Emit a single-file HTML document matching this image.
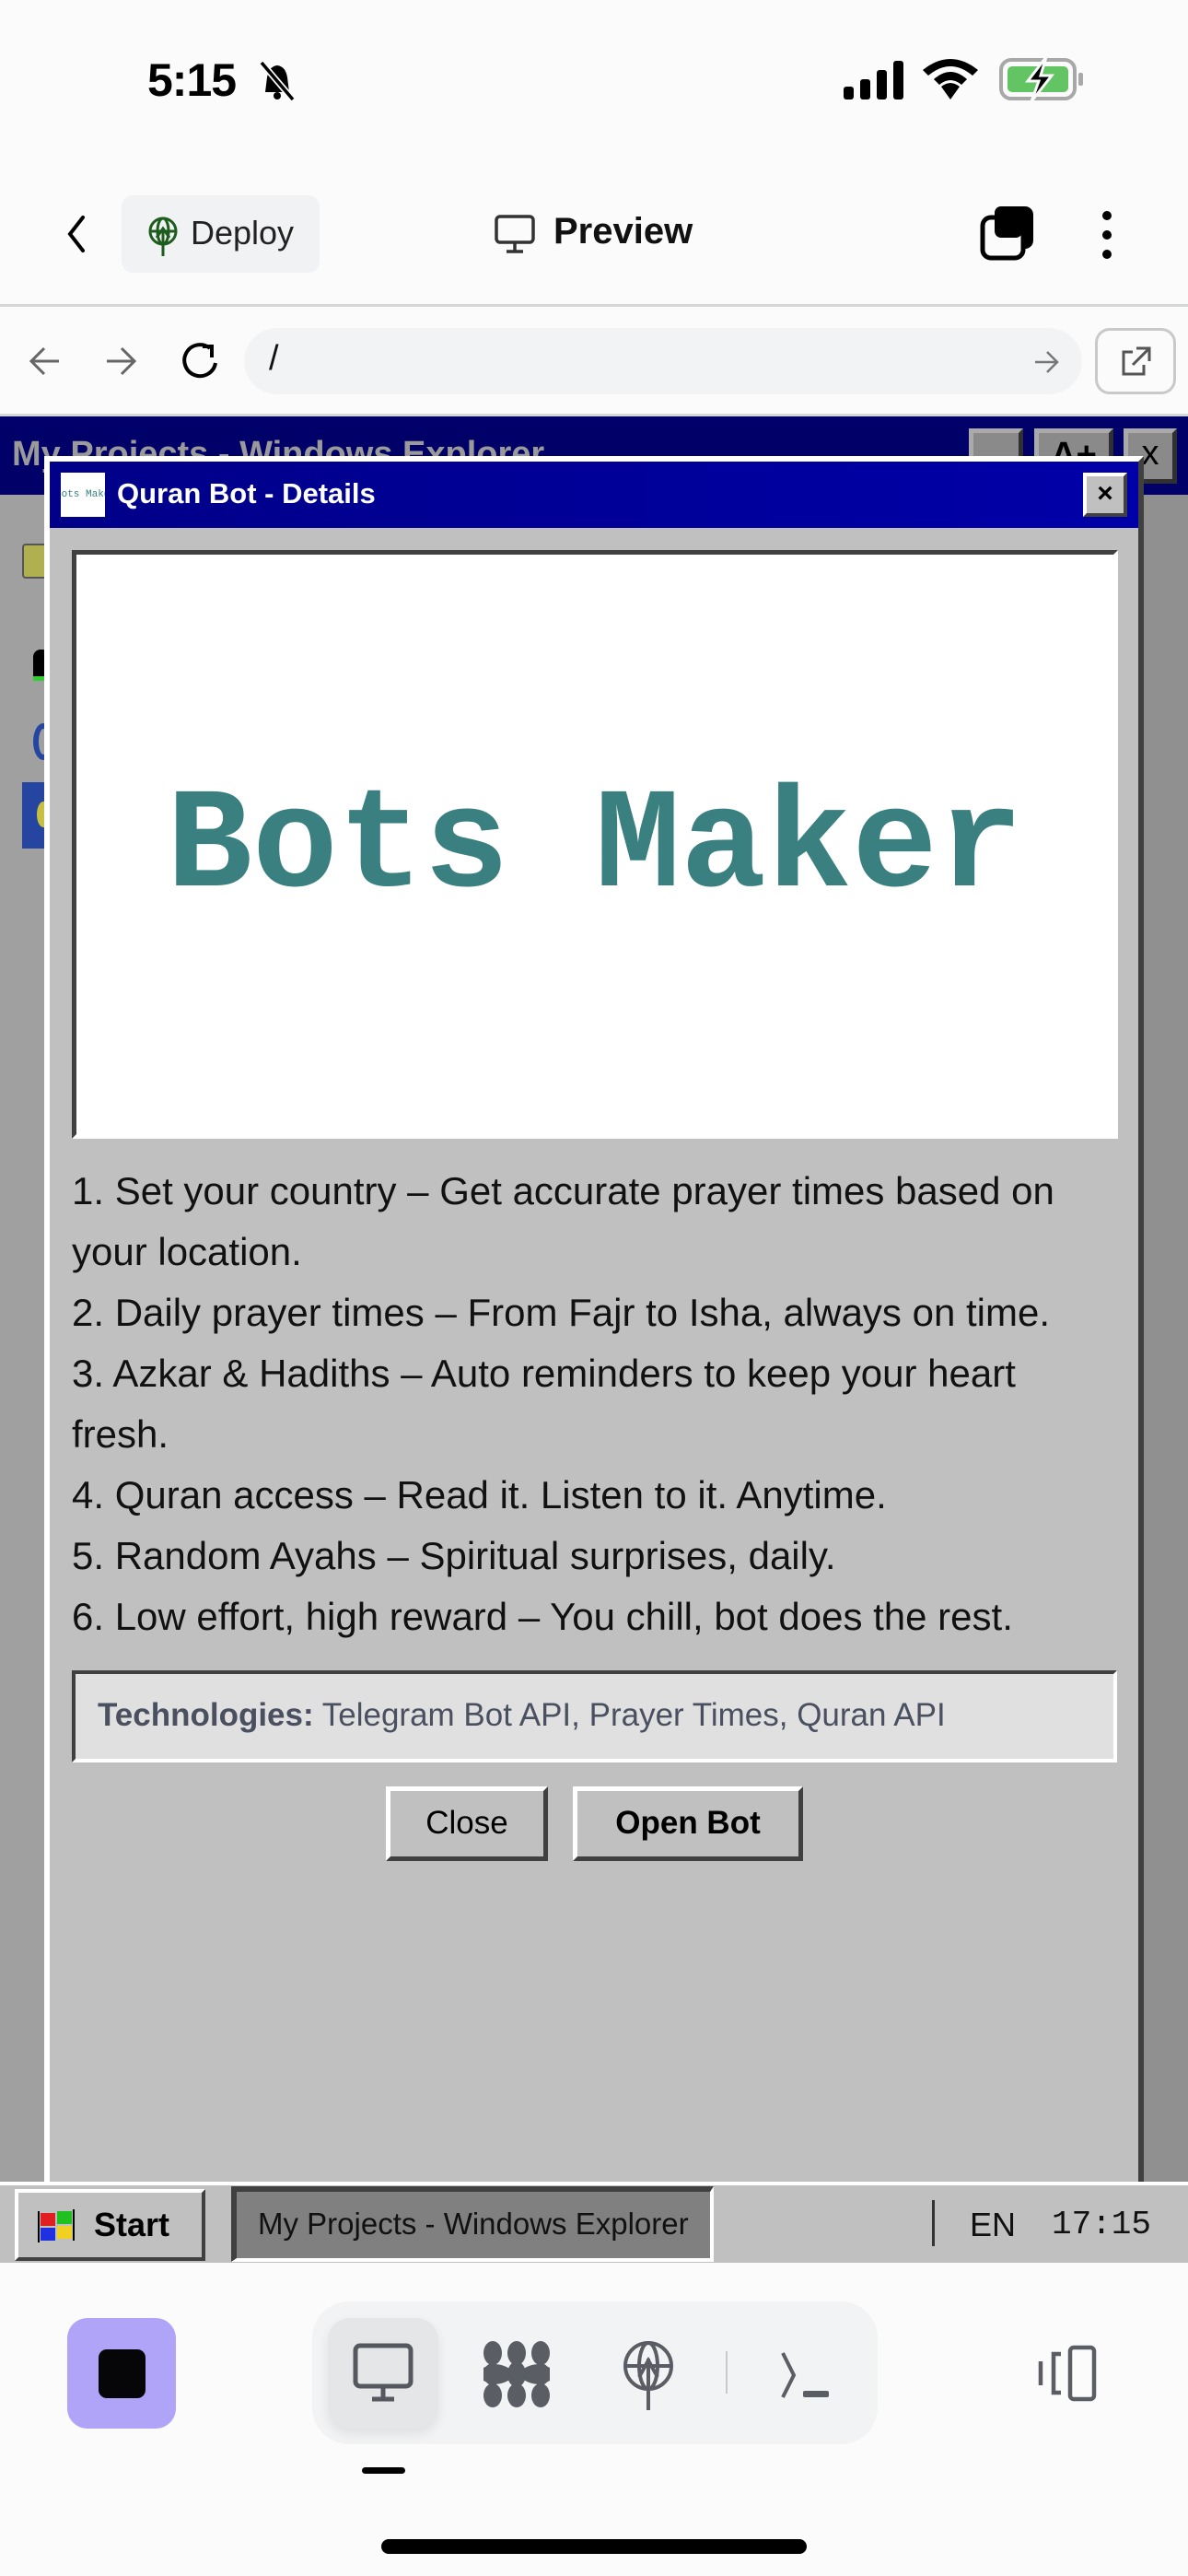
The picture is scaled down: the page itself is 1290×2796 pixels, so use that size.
<!DOCTYPE html>
<html><head><meta charset="utf-8"><style>
*{margin:0;padding:0;box-sizing:border-box}
body{width:1290px;height:2796px;background:#fbfbfb;position:relative;overflow:hidden;font-family:"Liberation Sans",sans-serif}
.a{position:absolute}
.raised{background:#c0c0c0;border-style:solid;border-width:4px;border-color:#fff #404040 #404040 #fff}
.sunk{border-style:solid;border-width:5px;border-color:#404040 #fff #fff #404040}
</style></head><body>

<!-- status bar -->
<div class="a" style="left:160px;top:58px;font-size:50px;font-weight:bold;letter-spacing:-1px">5:15</div>
<svg class="a" style="left:278px;top:66px" width="46" height="44" viewBox="0 0 46 44"><path d="M10 34 L12 18 Q14 6 23 5 Q32 6 34 18 L36 34 Z" fill="#000"/><circle cx="23" cy="38" r="4" fill="#000"/><path d="M6 2 L40 42" stroke="#fbfbfb" stroke-width="7"/><path d="M6 2 L40 42" stroke="#000" stroke-width="3.5"/></svg>
<svg class="a" style="left:914px;top:64px" width="70" height="44"><rect x="2" y="30" width="11" height="14" rx="3"/><rect x="20" y="22" width="11" height="22" rx="3"/><rect x="38" y="12" width="11" height="32" rx="3"/><rect x="56" y="2" width="11" height="42" rx="3"/></svg>
<svg class="a" style="left:1000px;top:64px" width="64" height="46" viewBox="0 0 64 46"><path d="M32 44 L22 30 Q32 22 42 30 Z" /><path d="M16 24 Q32 10 48 24 L42 30 Q32 22 22 30Z" fill="#fbfbfb"/><path d="M14 22 Q32 6 50 22 L44 28 Q32 18 20 28 Z"/><path d="M2 12 Q32 -12 62 12 L56 18 Q32 -2 8 18 Z"/></svg>
<svg class="a" style="left:1084px;top:62px" width="96" height="48"><rect x="3" y="3" width="80" height="42" rx="11" fill="none" stroke="#a8a8a8" stroke-width="4"/><rect x="10" y="10" width="66" height="28" rx="5" fill="#62c462"/><rect x="87" y="17" width="5" height="14" rx="2" fill="#a8a8a8"/><path d="M52 0 L32 26 L44 26 L36 48 L58 20 L46 20 Z" fill="#000" stroke="#fbfbfb" stroke-width="3"/></svg>

<!-- header -->
<svg class="a" style="left:68px;top:232px" width="30" height="44"><path d="M22 4 L8 22 L22 40" fill="none" stroke="#000" stroke-width="4" stroke-linecap="round"/></svg>
<div class="a" style="left:132px;top:212px;width:215px;height:84px;background:#f1f2f4;border-radius:12px"></div>
<svg class="a" style="left:160px;top:234px" width="34" height="44" viewBox="0 0 34 44"><g fill="none" stroke="#1f5d1f" stroke-width="3"><circle cx="17" cy="17" r="14"/><ellipse cx="17" cy="17" rx="6" ry="14"/><path d="M3 17H31M17 14V44M10 24L17 14L24 24"/></g></svg>
<div class="a" style="left:207px;top:232px;font-size:36px;color:#222">Deploy</div>
<svg class="a" style="left:536px;top:232px" width="46" height="44"><rect x="3" y="3" width="40" height="28" rx="4" fill="none" stroke="#333" stroke-width="3.5"/><path d="M23 31V40M14 41H32" stroke="#333" stroke-width="3.5"/></svg>
<div class="a" style="left:601px;top:229px;font-size:40px;font-weight:bold;color:#111">Preview</div>
<svg class="a" style="left:1064px;top:222px" width="62" height="62"><rect x="16" y="2" width="42" height="46" rx="9"/><rect x="3" y="14" width="44" height="44" rx="9" fill="#fbfbfb" stroke="#000" stroke-width="5"/><rect x="16" y="2" width="30" height="34" rx="7"/></svg>
<svg class="a" style="left:1190px;top:226px" width="24" height="58"><circle cx="12" cy="8" r="5"/><circle cx="12" cy="29" r="5"/><circle cx="12" cy="50" r="5"/></svg>
<div class="a" style="left:0;top:330px;width:1290px;height:3px;background:#d6d7d9"></div>

<!-- url row -->
<svg class="a" style="left:30px;top:374px" width="40" height="36"><path d="M34 18H4M18 4L4 18L18 32" fill="none" stroke="#666" stroke-width="3"/></svg>
<svg class="a" style="left:112px;top:374px" width="40" height="36"><path d="M4 18H34M20 4L34 18L20 32" fill="none" stroke="#666" stroke-width="3"/></svg>
<svg class="a" style="left:194px;top:370px" width="48" height="46"><path d="M34 8 A17 17 0 1 0 40 24" fill="none" stroke="#000" stroke-width="4"/><path d="M26 6H36V18" fill="none" stroke="#000" stroke-width="4"/></svg>
<div class="a" style="left:265px;top:356px;width:910px;height:72px;background:#f2f3f5;border-radius:36px"></div>
<div class="a" style="left:292px;top:368px;font-size:38px;color:#111">/</div>
<svg class="a" style="left:1122px;top:380px" width="28" height="26"><path d="M2 13H26M15 2L26 13L15 24" fill="none" stroke="#777" stroke-width="2.5"/></svg>
<div class="a" style="left:1189px;top:356px;width:88px;height:72px;border:3px solid #c8c9cb;border-radius:16px;background:#fbfbfb"></div>
<svg class="a" style="left:1214px;top:374px" width="40" height="38"><path d="M16 8H6V32H28V22M20 4H34V18M34 4L16 22" fill="none" stroke="#555" stroke-width="3"/></svg>
<div class="a" style="left:0;top:449px;width:1290px;height:3px;background:#d6d7d9"></div>

<!-- explorer (dimmed) -->
<div class="a" style="left:0;top:452px;width:1290px;height:1918px;background:#909090"></div>
<div class="a" style="left:0;top:452px;width:60px;height:1918px;background:#a0a0a0"></div>
<div class="a" style="left:0;top:452px;width:1290px;height:85px;background:#000068"></div>
<div class="a" style="left:13px;top:472px;font-size:38px;font-weight:bold;color:#9a9a9a;white-space:nowrap">My Projects - Windows Explorer</div>
<div class="a" style="left:1052px;top:465px;width:59px;height:60px;background:#8a8a8a;border:5px solid;border-color:#aaa #303030 #303030 #aaa"></div>
<div class="a" style="left:1123px;top:465px;width:86px;height:60px;background:#8a8a8a;border:5px solid;border-color:#aaa #303030 #303030 #aaa;font-size:38px;font-weight:bold;text-align:center;line-height:48px">A+</div>
<div class="a" style="left:1220px;top:465px;width:58px;height:60px;background:#8a8a8a;border:5px solid;border-color:#aaa #303030 #303030 #aaa;font-size:38px;text-align:center;line-height:44px">x</div>
<div class="a" style="left:24px;top:590px;width:30px;height:38px;background:#b0b050;border:2px solid #555;border-radius:4px"></div>
<div class="a" style="left:36px;top:705px;width:18px;height:34px;background:#000;border-radius:8px 8px 0 0;border-bottom:5px solid #3c3"></div>
<div class="a" style="left:36px;top:785px;width:22px;height:40px;border:6px solid #2545a0;border-radius:50%"></div>
<div class="a" style="left:24px;top:849px;width:30px;height:72px;background:#2545a0"></div>
<div class="a" style="left:40px;top:870px;width:14px;height:28px;background:#c8c040;border-radius:50% 0 0 50%"></div>

<!-- modal -->
<div class="a" style="left:48px;top:495px;width:1194px;height:1875px;background:#c0c0c0;border-style:solid;border-width:6px 6px 0 6px;border-color:#fff #404040 #404040 #fff"></div>
<div class="a" style="left:54px;top:501px;width:1182px;height:72px;background:linear-gradient(90deg,#000088,#0000a8)"></div>
<div class="a" style="left:66px;top:513px;width:48px;height:48px;background:#fff;overflow:hidden;font-family:'Liberation Mono',monospace;font-size:11px;color:#3a8080;line-height:48px;white-space:nowrap;text-indent:-6px">Bots Maker</div>
<div class="a" style="left:127px;top:518px;font-size:31px;font-weight:bold;color:#fff">Quran Bot - Details</div>
<div class="a raised" style="left:1176px;top:513px;width:48px;height:48px;font-size:30px;font-weight:bold;text-align:center;line-height:38px">×</div>

<div class="a sunk" style="left:78px;top:597px;width:1136px;height:639px;background:#fff"></div>
<div class="a" style="left:78px;top:830px;width:1136px;text-align:center;font-family:'Liberation Mono',monospace;font-weight:bold;font-size:155px;color:#3a8080;line-height:180px;white-space:nowrap">Bots Maker</div>

<div class="a" style="left:78px;top:1260px;width:1137px;font-size:42px;line-height:66px;color:#111">
1. Set your country – Get accurate prayer times based on your location.<br>
2. Daily prayer times – From Fajr to Isha, always on time.<br>
3. Azkar &amp; Hadiths – Auto reminders to keep your heart fresh.<br>
4. Quran access – Read it. Listen to it. Anytime.<br>
5. Random Ayahs – Spiritual surprises, daily.<br>
6. Low effort, high reward – You chill, bot does the rest.
</div>

<div class="a" style="left:78px;top:1813px;width:1135px;height:100px;background:#e0e0e0;border-style:solid;border-width:4px;border-color:#404040 #fff #fff #404040"></div>
<div class="a" style="left:106px;top:1842px;font-size:35px;color:#4a5060;white-space:nowrap"><b>Technologies:</b> Telegram Bot API, Prayer Times, Quran API</div>

<div class="a raised" style="left:419px;top:1939px;width:176px;height:81px;border-width:5px;font-size:35px;text-align:center;line-height:70px">Close</div>
<div class="a raised" style="left:622px;top:1939px;width:250px;height:81px;border-width:5px;font-size:35px;font-weight:bold;text-align:center;line-height:70px">Open Bot</div>

<!-- taskbar -->
<div class="a" style="left:0;top:2368px;width:1290px;height:88px;background:#c0c0c0;border-top:4px solid #fff"></div>
<div class="a raised" style="left:16px;top:2376px;width:207px;height:78px;border-width:4px"></div>
<svg class="a" style="left:40px;top:2396px" width="46" height="40"><g><rect x="4" y="6" width="16" height="14" fill="#e02020"/><rect x="22" y="4" width="16" height="14" fill="#20c020"/><rect x="4" y="22" width="16" height="14" fill="#2030e0"/><rect x="22" y="20" width="16" height="14" fill="#f0d020"/></g><path d="M2 4V38M40 2V36" stroke="#000" stroke-width="2"/></svg>
<div class="a" style="left:102px;top:2394px;font-size:36px;font-weight:bold">Start</div>
<div class="a" style="left:251px;top:2373px;width:524px;height:82px;background:#808080;border-style:solid;border-width:6px 4px 4px 6px;border-color:#404040 #fff #fff #404040"></div>
<div class="a" style="left:280px;top:2395px;font-size:33px;color:#111">My Projects - Windows Explorer</div>
<div class="a" style="left:1012px;top:2388px;width:3px;height:50px;background:#333"></div>
<div class="a" style="left:1053px;top:2394px;font-size:36px;color:#111">EN</div>
<div class="a" style="left:1142px;top:2394px;font-size:36px;color:#111;font-family:'Liberation Mono',monospace">17:15</div>

<!-- bottom nav -->
<div class="a" style="left:73px;top:2516px;width:118px;height:120px;background:#b0a4f8;border-radius:22px"></div>
<div class="a" style="left:107px;top:2550px;width:51px;height:53px;background:#060608;border-radius:9px"></div>
<div class="a" style="left:339px;top:2498px;width:614px;height:155px;background:#f2f3f5;border-radius:40px"></div>
<div class="a" style="left:356px;top:2516px;width:120px;height:120px;background:#e5e6e8;border-radius:24px;box-shadow:0 6px 12px rgba(0,0,0,.08)"></div>
<svg class="a" style="left:382px;top:2542px" width="70" height="68"><rect x="4" y="4" width="60" height="44" rx="5" fill="none" stroke="#55585e" stroke-width="5"/><path d="M34 48V60M22 62H46" stroke="#55585e" stroke-width="5"/></svg>
<svg class="a" style="left:523px;top:2540px" width="76" height="74" viewBox="0 0 76 74" fill="#5a5d64"><ellipse cx="12" cy="14" rx="10" ry="13"/><ellipse cx="38" cy="14" rx="10" ry="13"/><ellipse cx="64" cy="14" rx="10" ry="13"/><ellipse cx="12" cy="60" rx="10" ry="13"/><ellipse cx="38" cy="60" rx="10" ry="13"/><ellipse cx="64" cy="60" rx="10" ry="13"/><path d="M2 30 Q20 20 38 37 Q56 54 74 44 L74 30 Q56 20 38 37 Q20 54 2 44Z"/><ellipse cx="12" cy="37" rx="10" ry="12"/><ellipse cx="64" cy="37" rx="10" ry="12"/><ellipse cx="38" cy="37" rx="10" ry="14"/></svg>
<svg class="a" style="left:674px;top:2540px" width="60" height="76" viewBox="0 0 60 76"><g fill="none" stroke="#5a5d64" stroke-width="4"><circle cx="30" cy="28" r="25"/><ellipse cx="30" cy="28" rx="10" ry="25"/><path d="M5 28H55M30 20V76M20 40L30 22L40 40"/></g></svg>
<div class="a" style="left:788px;top:2552px;width:2px;height:46px;background:#c8c9cc"></div>
<svg class="a" style="left:846px;top:2550px" width="58" height="56"><path d="M4 4L16 28L4 52" fill="none" stroke="#5a5d64" stroke-width="4"/><rect x="26" y="45" width="28" height="7" rx="2" fill="#5a5d64"/></svg>
<svg class="a" style="left:1122px;top:2545px" width="72" height="62"><g fill="none" stroke="#5a5d64" stroke-width="4.5"><rect x="40" y="3" width="26" height="56" rx="4"/><path d="M30 10H22V52H30M8 18V44"/></g></svg>
<div class="a" style="left:393px;top:2678px;width:47px;height:7px;background:#000;border-radius:4px"></div>
<div class="a" style="left:414px;top:2756px;width:462px;height:16px;background:#000;border-radius:8px"></div>
</body></html>
